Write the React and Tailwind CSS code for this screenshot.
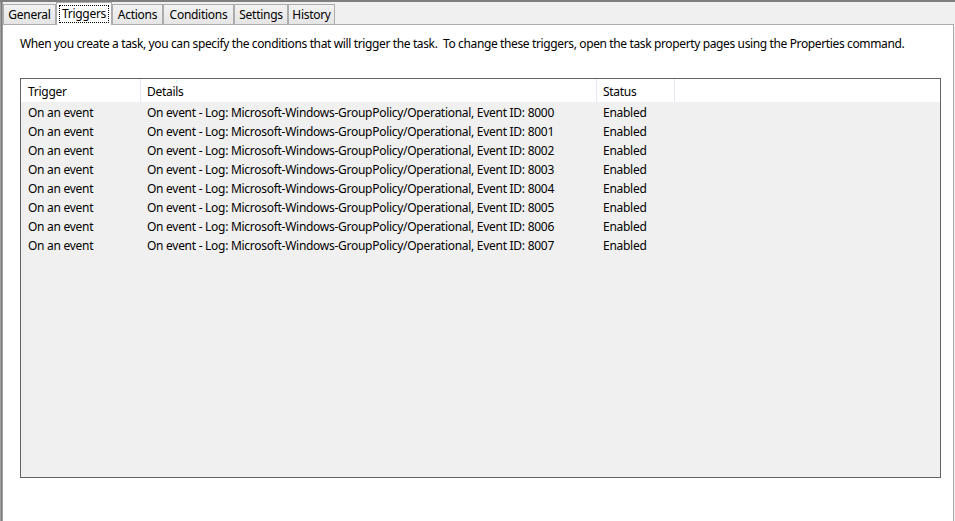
import React from "react";

const tabs = [
  { name: "General", w: "w-[53px]" },
  { name: "Triggers", w: "w-[56px]", active: true },
  { name: "Actions", w: "w-[51px]" },
  { name: "Conditions", w: "w-[71px]" },
  { name: "Settings", w: "w-[54px]" },
  { name: "History", w: "w-[47px]" },
];

const rows = [8000, 8001, 8002, 8003, 8004, 8005, 8006, 8007];

export default function App() {
  return (
    <div className="w-[955px] h-[521px] flex flex-col bg-[#f0f0f0] border-t-2 border-[#7f7f7f] text-[12px] tracking-[-0.28px] text-black font-['Noto_Sans',sans-serif] overflow-hidden">
      <div className="flex flex-1 min-h-0">
        <div className="w-[3px] flex shrink-0">
          <div className="w-px bg-[#a0a0a0]" />
          <div className="w-px bg-[#7a7a7a]" />
          <div className="w-px bg-[#a0a0a0]" />
        </div>
        <div className="flex-1 flex flex-col min-w-0">
          <div className="h-[22px] flex items-end shrink-0">
            {tabs.map((t) =>
              t.active ? (
                <div
                  key={t.name}
                  className={`${t.w} h-[23px] -mb-px relative z-10 bg-white border border-b-0 border-[#acacac] flex items-center justify-center`}
                >
                  <span className="px-[2px] leading-[16px] outline outline-1 outline-dotted outline-black">
                    {t.name}
                  </span>
                </div>
              ) : (
                <div
                  key={t.name}
                  className={`${t.w} h-[20px] bg-gradient-to-b from-[#f2f2f2] to-[#e5e5e5] border border-b-0 border-[#acacac] flex items-center justify-center pt-px`}
                >
                  {t.name}
                </div>
              )
            )}
          </div>
          <div className="flex-1 min-h-0 bg-white border-t border-r border-[#acacac] mr-px pl-[17px] pt-[11px] flex flex-col">
            <p className="leading-[16px] whitespace-nowrap tracking-[-0.37px]">
              When you create a task, you can specify the conditions that will trigger the task.&nbsp; To change these triggers, open the task property pages using the Properties command.
            </p>
            <div className="mt-[26px] w-[921px] h-[400px] border border-[#646464] bg-[#f0f0f0] flex flex-col">
              <div className="h-[23px] bg-white flex shrink-0">
                <div className="w-[120px] border-r border-[#e3e9f2] pl-[7px] pt-[2px] flex items-center">Trigger</div>
                <div className="w-[456px] border-r border-[#e3e9f2] pl-[6px] pt-[2px] flex items-center">Details</div>
                <div className="w-[78px] border-r border-[#e3e9f2] pl-[6px] pt-[2px] flex items-center">Status</div>
                <div className="flex-1" />
              </div>
              {rows.map((id) => (
                <div key={id} className="h-[19px] flex items-center whitespace-nowrap pt-[2px]">
                  <div className="w-[120px] pl-[7px]">On an event</div>
                  <div className="w-[456px] pl-[6px]">
                    On event - Log: Microsoft-Windows-GroupPolicy/Operational, Event ID: {id}
                  </div>
                  <div className="w-[78px] pl-[6px]">Enabled</div>
                </div>
              ))}
            </div>
          </div>
        </div>
      </div>
    </div>
  );
}
